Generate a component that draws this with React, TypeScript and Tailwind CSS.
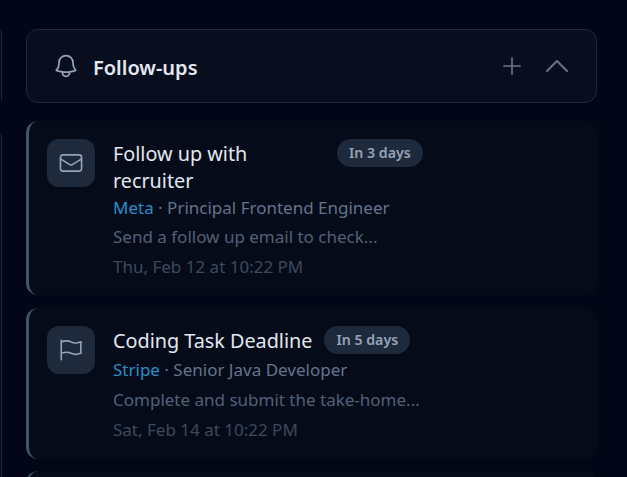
import React from 'react';
import { HiOutlineBell, HiOutlineChevronUp, HiOutlineEnvelope, HiOutlineFlag, HiOutlinePlus } from 'react-icons/hi2';

const font = "font-['Noto_Sans',sans-serif]";

const FollowUpCard: React.FC<{
  icon: React.ReactNode;
  title: string;
  badge: string;
  company: string;
  role: string;
  note: string;
  date: string;
  titleClass?: string;
  noteClass?: string;
  cardClass?: string;
}> = ({ icon, title, badge, company, role, note, date, titleClass = '', noteClass = 'mt-1.5', cardClass = 'pb-4' }) => (
  <div className={`flex shrink-0 gap-[18px] rounded-xl border-l-[3px] border-[#43536a] bg-[#060b1a] pt-[18px] pl-[18px] ${cardClass}`}>
    <div className="flex h-12 w-12 shrink-0 items-center justify-center rounded-xl bg-[#1e293b] text-[#94a3b8]">
      {icon}
    </div>
    <div className="min-w-0 flex-1">
      <div className="flex items-start gap-3">
        <h3 className={`mt-px text-[19.8px] leading-[27px] text-[#e2e8f0] ${titleClass}`}>{title}</h3>
        <span className="mb-0.5 rounded-full bg-[#1e293b] px-3 py-1 text-[14.2px] leading-5 font-semibold whitespace-nowrap text-[#94a3b8]">{badge}</span>
      </div>
      <p className="mt-0.5 text-[17px] leading-6 text-[#64748b]">
        <span className="text-[#2591c7]">{company}</span> · {role}
      </p>
      <p className={`text-[17px] leading-6 text-[#526076] ${noteClass}`}>{note}</p>
      <p className="mt-1.5 text-[17px] leading-6 text-[#3d495c]">{date}</p>
    </div>
  </div>
);

export default function App() {
  return (
    <div className={`h-[477px] w-[627px] overflow-hidden bg-[#020617] ${font}`}>
      <div className="flex h-full gap-6">
        <div className="flex w-0.5 shrink-0 flex-col gap-8 pt-[29px]">
          <div className="h-[72px] rounded-r-xl border-r border-[#1e293b]" />
          <div className="flex-1 rounded-tr-xl border-r border-[#1e293b]" />
        </div>
        <div className="flex w-[571px] shrink-0 flex-col pt-[29px]">
          <div className="flex h-[74px] shrink-0 items-center justify-between rounded-xl border border-[#1e293b] bg-[#090e1f] pr-[23px] pl-[25px]">
            <div className="flex items-center gap-[13px]">
              <HiOutlineBell size={28} className="text-[#94a3b8]" />
              <h2 className="mt-1 text-[20px] font-semibold text-[#e2e8f0]">Follow-ups</h2>
            </div>
            <div className="flex items-center gap-4 text-[#64748b]">
              <HiOutlinePlus size={26} className="-mt-px" />
              <HiOutlineChevronUp size={32} />
            </div>
          </div>
          <div className="mt-[18px] flex flex-col gap-[13px]">
            <FollowUpCard
              icon={<HiOutlineEnvelope size={26} />}
              title="Follow up with recruiter"
              titleClass="w-[212px]"
              noteClass="mt-[5px]"
              badge="In 3 days"
              company="Meta"
              role="Principal Frontend Engineer"
              note="Send a follow up email to check..."
              date="Thu, Feb 12 at 10:22 PM"
            />
            <FollowUpCard
              icon={<HiOutlineFlag size={26} />}
              title="Coding Task Deadline"
              cardClass="pb-[17px]"
              badge="In 5 days"
              company="Stripe"
              role="Senior Java Developer"
              note="Complete and submit the take-home..."
              date="Sat, Feb 14 at 10:22 PM"
            />
            <div className="-mt-px h-20 shrink-0 rounded-xl border-l-[3px] border-[#43536a] bg-[#060b1a]" />
          </div>
        </div>
      </div>
    </div>
  );
}
